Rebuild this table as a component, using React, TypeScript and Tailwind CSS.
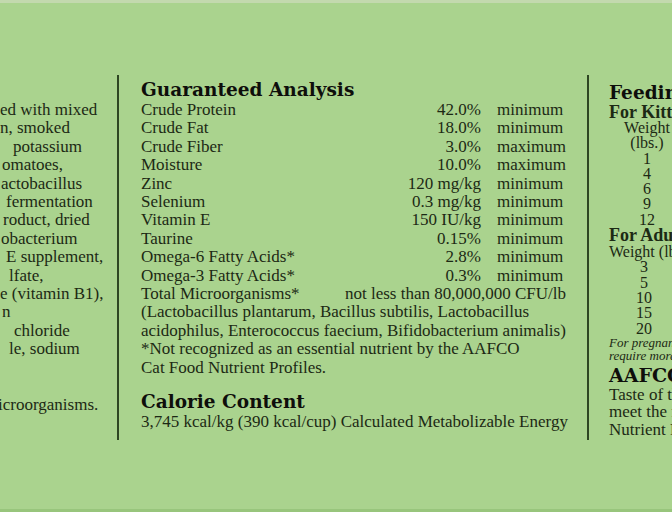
import React from "react";

const analysis = [
  ["Crude Protein", "42.0%", "minimum"],
  ["Crude Fat", "18.0%", "minimum"],
  ["Crude Fiber", "3.0%", "maximum"],
  ["Moisture", "10.0%", "maximum"],
  ["Zinc", "120 mg/kg", "minimum"],
  ["Selenium", "0.3 mg/kg", "minimum"],
  ["Vitamin E", "150 IU/kg", "minimum"],
  ["Taurine", "0.15%", "minimum"],
  ["Omega-6 Fatty Acids*", "2.8%", "minimum"],
  ["Omega-3 Fatty Acids*", "0.3%", "minimum"],
];

// ingredient list is cut off by the left edge, only the tails show
const ingredients = [
  { text: "ed with mixed", cls: "ml-0" },
  { text: "n, smoked", cls: "ml-0" },
  { text: "potassium", cls: "ml-[13px]" },
  { text: "omatoes,", cls: "ml-[2px]" },
  { text: "actobacillus", cls: "ml-[1px]" },
  { text: "fermentation", cls: "ml-[6px]" },
  { text: "roduct, dried", cls: "ml-[3px]" },
  { text: "obacterium", cls: "ml-[1px]" },
  { text: "E supplement,", cls: "ml-[6px]" },
  { text: "lfate,", cls: "ml-[9px]" },
  { text: "e (vitamin B1),", cls: "ml-0" },
  { text: "n", cls: "ml-[2px]" },
  { text: "chloride", cls: "ml-[14px]" },
  { text: "le, sodium", cls: "ml-[9px]" },
  { text: "\u00a0", cls: "ml-0" },
  { text: "\u00a0", cls: "ml-0" },
  { text: "icroorganisms.", cls: "-ml-[2px]" },
];

const kittens = ["1", "4", "6", "9", "12"];
const adults = ["3", "5", "10", "15", "20"];

const heading = "font-['DejaVu_Serif',serif] font-bold text-[18.5px] leading-[22px] text-[#0e0e0b] whitespace-nowrap";

export default function App() {
  return (
    <div className="relative w-[672px] h-[512px] overflow-hidden bg-[#aad38e] text-[#1c2914] font-['Liberation_Serif',serif] text-[17px] leading-[18.4px]">
      <div className="absolute top-0 left-0 right-0 h-[3px] bg-[#c3d9ae]" />
      <div className="absolute bottom-0 left-0 right-0 h-[3px] bg-[#98c57c]" />

      <div className="flex h-full">
        {/* ingredients (cut) */}
        <div className="w-[117px] overflow-hidden pt-[101px]">
          {ingredients.map((l, i) => (
            <div key={i} className={`whitespace-nowrap ${l.cls}`}>
              {l.text}
            </div>
          ))}
        </div>

        <div className="w-[2px] h-[365px] mt-[75px] bg-[#2e4622]" />

        {/* guaranteed analysis */}
        <div className="w-[468px] pt-[79px] pl-[22px] pr-[21px]">
          <h2 className={heading}>Guaranteed Analysis</h2>
          {analysis.map(([label, value, kind]) => (
            <div key={label} className="flex whitespace-nowrap">
              <span className="flex-1">{label}</span>
              <span className="text-right">{value}</span>
              <span className="w-[69px] ml-[16px]">{kind}</span>
            </div>
          ))}
          <div className="flex justify-between whitespace-nowrap">
            <span>Total Microorganisms*</span>
            <span>not less than 80,000,000 CFU/lb</span>
          </div>
          <div className="whitespace-nowrap">(Lactobacillus plantarum, Bacillus subtilis, Lactobacillus</div>
          <div className="whitespace-nowrap">acidophilus, Enterococcus faecium, Bifidobacterium animalis)</div>
          <div className="whitespace-nowrap">*Not recognized as an essential nutrient by the AAFCO</div>
          <div className="whitespace-nowrap">Cat Food Nutrient Profiles.</div>

          <h2 className={`${heading} mt-[14px]`}>Calorie Content</h2>
          <div className="whitespace-nowrap">3,745 kcal/kg (390 kcal/cup) Calculated Metabolizable Energy</div>
        </div>

        <div className="w-[2px] h-[365px] mt-[75px] bg-[#2e4622]" />

        {/* feeding guide (cut) */}
        <div className="flex-1 overflow-hidden pt-[82px] pl-[20px]">
          <h2 className={`${heading} leading-[20px]`}>Feeding Guidelines</h2>
          <div className="font-bold text-[18px] leading-[16px] whitespace-nowrap">For Kittens</div>
          <div className="w-[76px] text-center text-[16px] leading-[15.3px]">
            <div className="whitespace-nowrap">Weight</div>
            <div>(lbs.)</div>
            {kittens.map((n) => (
              <div key={n}>{n}</div>
            ))}
          </div>
          <div className="font-bold text-[18px] leading-[17px] whitespace-nowrap">For Adults</div>
          <div className="text-[16px] leading-[15.3px]">
            <div className="whitespace-nowrap">Weight (lbs.)</div>
            <div className="w-[70px] text-center">
              {adults.map((n) => (
                <div key={n}>{n}</div>
              ))}
            </div>
          </div>
          <div className="italic text-[13px] leading-[13px] whitespace-nowrap">
            <div>For pregnant or nursing cats</div>
            <div>require more food</div>
          </div>
          <h2 className={`${heading} text-[19px] mt-[2px]`}>AAFCO Statement</h2>
          <div className="leading-[17.5px]">
            <div className="whitespace-nowrap">Taste of the Wild</div>
            <div className="whitespace-nowrap">meet the nutritional levels</div>
            <div className="whitespace-nowrap">Nutrient Profiles</div>
          </div>
        </div>
      </div>
    </div>
  );
}
